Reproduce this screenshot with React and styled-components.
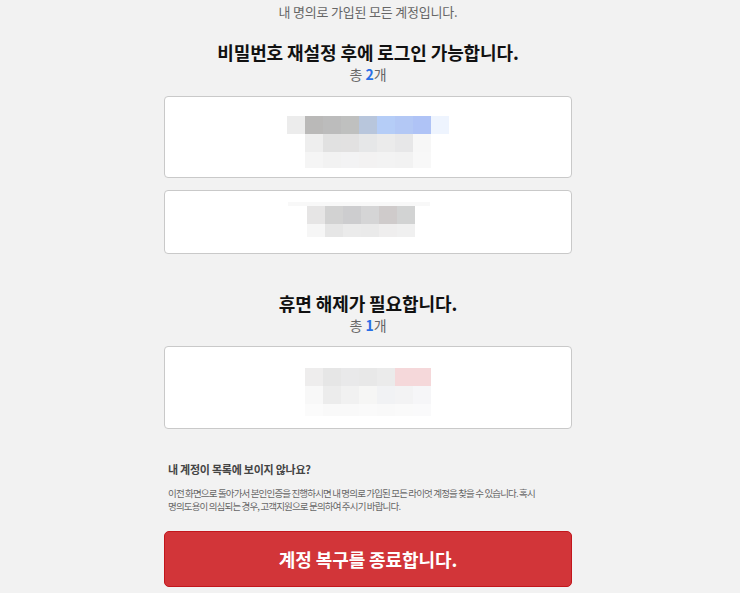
import React from "react";
import styled, { createGlobalStyle } from "styled-components";

const Global = createGlobalStyle`
  html, body { margin: 0; padding: 0; background: #f2f2f2; }
  body { font-family: "Noto Sans CJK KR", "Noto Sans", sans-serif; }
`;

const Page = styled.div`
  display: flex;
  justify-content: center;
  padding-right: 4px;
  min-height: 593px;
  box-sizing: border-box;
`;

const Column = styled.div`
  width: 408px;
  display: flex;
  flex-direction: column;
  align-items: stretch;
`;

const Intro = styled.p`
  margin: 0;
  padding-top: 2px;
  text-align: center;
  font-size: 13px;
  line-height: 19px;
  letter-spacing: -0.2px;
  color: #666;
`;

const SectionHead = styled.div`
  display: flex;
  flex-direction: column;
  align-items: center;
  margin-top: ${(p) => p.$top}px;
  margin-bottom: ${(p) => p.$bottom}px;
`;

const Title = styled.h2`
  margin: 0;
  font-size: 18px;
  line-height: 26px;
  font-weight: 700;
  letter-spacing: -0.1px;
  color: #111;
`;

const Count = styled.div`
  margin-top: -1px;
  font-size: 14px;
  line-height: 20px;
  color: #666;
  b {
    color: #2a6fe6;
    font-weight: 700;
  }
`;

const CardList = styled.div`
  display: flex;
  flex-direction: column;
  gap: 12px;
`;

const Card = styled.div`
  background: #fff;
  border: 1px solid #c9c9c9;
  border-radius: 4px;
  height: ${(p) => p.$h}px;
  box-sizing: border-box;
  padding-top: ${(p) => p.$pt}px;
  display: flex;
  flex-direction: column;
  align-items: center;
`;

const PixelRow = styled.div`
  display: flex;
  margin-left: ${(p) => p.$shift || 0}px;
`;

const Pixel = styled.span`
  display: block;
  width: ${(p) => p.$w || 18}px;
  height: ${(p) => p.$h}px;
  background: ${(p) => p.$c};
`;

const HelpBox = styled.div`
  margin-top: 32px;
  padding: 0 4px;
`;

const HelpTitle = styled.h3`
  margin: 0;
  font-size: 11px;
  line-height: 16px;
  font-weight: 700;
  letter-spacing: -0.25px;
  color: #444;
`;

const HelpText = styled.p`
  margin: 10px 0 0;
  font-size: 9.5px;
  line-height: 13px;
  letter-spacing: -0.85px;
  word-break: keep-all;
  color: #666;
`;

const EndButton = styled.button`
  margin-top: 18px;
  height: 56px;
  width: 100%;
  background: #d23539;
  border: 1px solid #c2161c;
  border-radius: 5px;
  color: #fff;
  font-family: inherit;
  font-size: 18px;
  font-weight: 700;
  letter-spacing: -0.1px;
  cursor: pointer;
`;

const card1 = [
  { h: 18, shift: 0, c: ["#ececec", "#bab9b8", "#bcbcbc", "#bfc0bf", "#b8c6dc", "#b5cdf7", "#b3c8f5", "#afc3f6", "#eef4fe"] },
  { h: 18, shift: 0, c: ["#eeeeee", "#e1e1e1", "#e2e1e1", "#e6e7e8", "#ebebeb", "#e7e7e8", "#f7f7f7"] },
  { h: 16, shift: 0, c: ["#f5f5f5", "#f2f2f2", "#f3f3f4", "#f3f2f2", "#f3f3f3", "#f2f2f2", "#f8f8f8"] },
];

const card2 = [
  { h: 4, shift: -19, w: 142, c: ["#f8f8f8"] },
  { h: 18, shift: -15, c: ["#e6e5e5", "#d2d2d2", "#cdcdcf", "#d5d5d6", "#cfcbcb", "#d2d3d3"] },
  { h: 13, shift: -15, c: ["#f6f6f6", "#e6e6e6", "#ebebeb", "#eaeaea", "#efeeee", "#f0f0f0"] },
];

const card3 = [
  { h: 18, shift: 0, c: ["#eeeded", "#e6e6e6", "#e9e9ea", "#e8e8e8", "#ebebeb", "#f5d8da", "#f5d8da"] },
  { h: 18, shift: 0, c: ["#f8f8f8", "#ececec", "#f1f1f1", "#f6f6f5", "#f1f2f4", "#f3f3f4", "#f6f6f8"] },
  { h: 12, shift: 0, c: ["#fbfbfb", "#f9f9f9", "#f9f9f9", "#fafafa", "#f9f9f9", "#fafafa", "#fafafb"] },
];

function Masked({ rows }) {
  return rows.map((r, i) => (
    <PixelRow key={i} $shift={r.shift}>
      {r.c.map((c, j) => (
        <Pixel key={j} $h={r.h} $w={r.w} $c={c} />
      ))}
    </PixelRow>
  ));
}

export default function App() {
  return (
    <>
      <Global />
      <Page>
        <Column>
          <Intro>내 명의로 가입된 모든 계정입니다.</Intro>

          <SectionHead $top={18} $bottom={12}>
            <Title>비밀번호 재설정 후에 로그인 가능합니다.</Title>
            <Count>
              총 <b>2</b>개
            </Count>
          </SectionHead>
          <CardList>
            <Card $h={82} $pt={19}>
              <Masked rows={card1} />
            </Card>
            <Card $h={64} $pt={11}>
              <Masked rows={card2} />
            </Card>
          </CardList>

          <SectionHead $top={36} $bottom={11}>
            <Title>휴면 해제가 필요합니다.</Title>
            <Count>
              총 <b>1</b>개
            </Count>
          </SectionHead>
          <CardList>
            <Card $h={83} $pt={21}>
              <Masked rows={card3} />
            </Card>
          </CardList>

          <HelpBox>
            <HelpTitle>내 계정이 목록에 보이지 않나요?</HelpTitle>
            <HelpText>
              이전 화면으로 돌아가서 본인인증을 진행하시면 내 명의로 가입된 모든 라이엇 계정을 찾을 수 있습니다. 혹시
              명의도용이 의심되는 경우, 고객지원으로 문의하여 주시기 바랍니다.
            </HelpText>
          </HelpBox>

          <EndButton>계정 복구를 종료합니다.</EndButton>
        </Column>
      </Page>
    </>
  );
}
